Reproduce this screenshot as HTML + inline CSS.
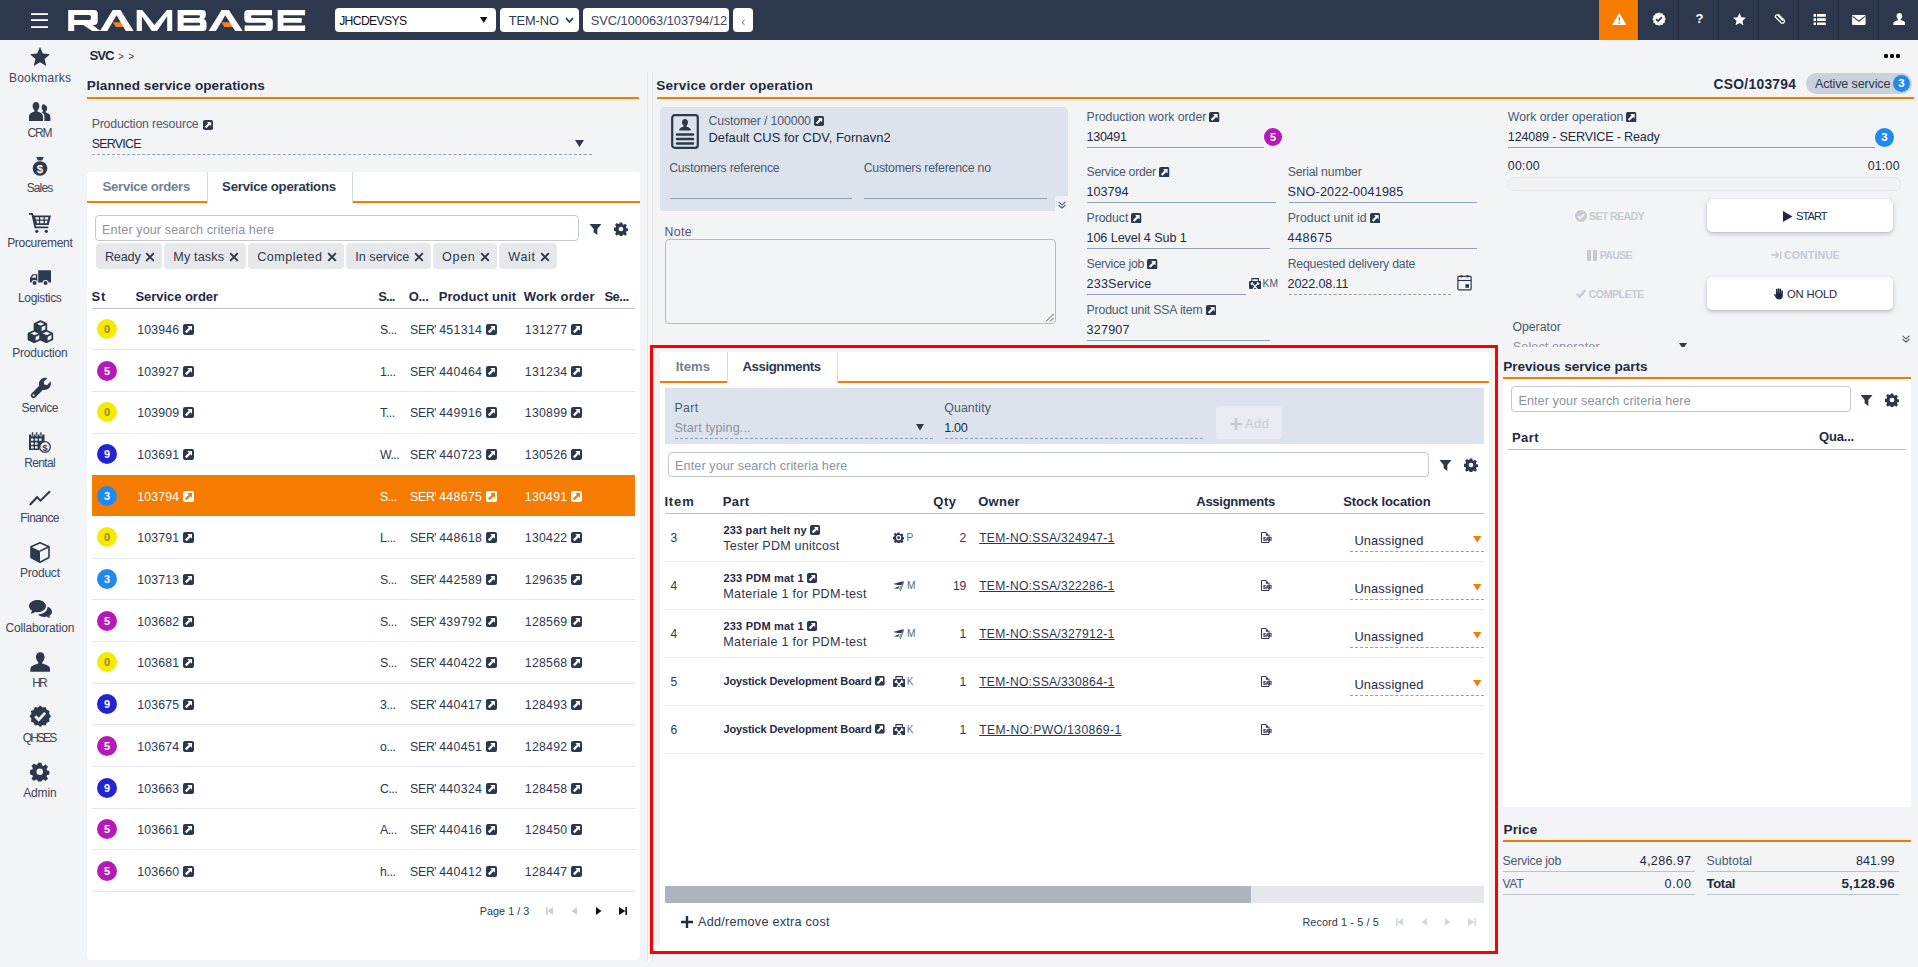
<!DOCTYPE html>
<html><head><meta charset="utf-8"><title>RamBase</title>
<style>
*{box-sizing:border-box;margin:0;padding:0}
html,body{width:1918px;height:967px;overflow:hidden}
body{background:#f3f4f6;font-family:"Liberation Sans",sans-serif;font-size:13px;color:#2d384d;position:relative}
.a{position:absolute}
.t{position:absolute;white-space:nowrap;line-height:20px;height:20px;font-size:12.5px;color:#2d384d}
.b{font-weight:bold}
.g{color:#4d586a}
.ph{color:#8b93a0}
.h{font-weight:bold;font-size:13.6px;color:#1f2a3f}
.th{font-weight:bold;font-size:13px;color:#1f2a3f}
.c{border-radius:50%;text-align:center;font-weight:bold}
.sb{position:absolute;left:0;width:80px;text-align:center;font-size:12px;color:#3b4659;line-height:14px;letter-spacing:-0.1px}
.card{position:absolute;background:#fff;border-radius:4px}
.chip{position:absolute;top:243px;height:26px;background:#e6e8eb;border-radius:4px}
.inp{position:absolute;border:1px solid #c3c8d0;border-radius:4px;background:#fff}
.u{text-decoration:underline}
.dis{color:#c3c8d1;font-weight:bold}
.btn{position:absolute;background:#fff;border-radius:5px;box-shadow:0 2px 4px rgba(60,70,90,.30),0 0 1px rgba(60,70,90,.2)}
</style></head><body>
<svg width="0" height="0" style="position:absolute">
<defs>
<symbol id="lk" viewBox="0 0 10 10"><rect width="10" height="10" rx="1.8" fill="#2d384d"/><path d="M3.9 1.900h4.300v4.300L6.800 4.800 3.300 8.300 1.800 6.800 5.300 3.300z" fill="#fff"/></symbol>
<symbol id="lkw" viewBox="0 0 10 10"><rect width="10" height="10" rx="1.8" fill="#fff"/><path d="M3.9 1.900h4.300v4.300L6.800 4.800 3.300 8.300 1.800 6.800 5.300 3.300z" fill="#f57c00"/></symbol>
<symbol id="filter" viewBox="0 0 14 14"><path d="M0.600 1h12.800L9 6.500v6.300L5 9.900V6.500z"/></symbol>
<symbol id="gear" viewBox="0 0 16 16"><path d="M6.6 0.6h2.8l.4 2.1 1.2.5 1.8-1.2 2 2-1.2 1.8.5 1.2 2.1.4v2.8l-2.1.4-.5 1.2 1.2 1.8-2 2-1.8-1.2-1.2.5-.4 2.1H6.600l-.4-2.1-1.200-.5-1.800 1.200-2-2 1.200-1.800-.5-1.200-2.100-.4V6.600l2.100-.4.5-1.200-1.200-1.800 2-2 1.800 1.200 1.200-.5zM8 5.300a2.700 2.700 0 1 0 0 5.400 2.700 2.700 0 0 0 0-5.400z" fill-rule="evenodd"/></symbol>
<symbol id="gear2" viewBox="0 0 16 16"><path d="M6.600 0.600h2.800l.4 2.100 1.200.5 1.800-1.200 2 2-1.200 1.800.5 1.200 2.100.4v2.800l-2.100.4-.5 1.200 1.200 1.800-2 2-1.800-1.200-1.200.5-.4 2.100H6.600l-.4-2.100-1.200-.5-1.800 1.200-2-2 1.200-1.800-.5-1.200-2.100-.4V6.600l2.100-.4.5-1.200-1.200-1.800 2-2 1.800 1.200 1.200-.5zM8 4.400a3.600 3.600 0 1 0 0 7.200 3.600 3.600 0 0 0 0-7.200z" fill-rule="evenodd"/><circle cx="8" cy="8" r="2"/></symbol>
<symbol id="xm" viewBox="0 0 10 10"><path d="M1.2 1.200l7.600 7.600M8.800 1.200l-7.600 7.600" stroke="#2d384d" stroke-width="1.9" fill="none"/></symbol>
<symbol id="doc" viewBox="0 0 13 13"><path d="M1.500 1.500H6L9 4.500V11.500H1.500Z" fill="none" stroke="#2d384d" stroke-width="1"/><path d="M5.800 1.500V4.700H9Z" fill="#2d384d"/><text x="2.900" y="9.600" font-family="Liberation Sans" font-weight="bold" font-size="4.800" fill="#1a2233" stroke="#2d384d" stroke-width=".25" textLength="8.800" lengthAdjust="spacingAndGlyphs">SAR</text></symbol>
</defs></svg>

<div class="a" style="left:0;top:0;width:1918px;height:40px;background:#2e384d"></div>
<svg class="a" style="left:31px;top:12.8px" width="17" height="2.200" viewBox="0 0 17 2.200"><rect x="0" y=".2" width="17" height="1.800" fill="#fff"/></svg>
<svg class="a" style="left:31px;top:18.8px" width="17" height="2.200" viewBox="0 0 17 2.200"><rect x="0" y=".2" width="17" height="1.800" fill="#fff"/></svg>
<svg class="a" style="left:31px;top:25.8px" width="17" height="2.200" viewBox="0 0 17 2.200"><rect x="0" y=".2" width="17" height="1.800" fill="#fff"/></svg>
<svg class="a" style="left:60px;top:4px" width="260" height="32" viewBox="60 4 260 32">
<g fill="#f58220">
<path d="M112.700 22.200H121.500L125.200 26.900H115.900Z"/>
<path d="M221.400 22.200H230.100L233.800 26.900H224.200Z"/>
</g>
<g fill="#fff" fill-rule="evenodd">
<path d="M68.200 10H94Q97.700 10 97.700 13.500V21.600Q97.700 25.070 94 25.070H92.600L100.400 31.070H92.200L83.300 25.070H74.200V31.070H68.200ZM74.200 14.900H89.200Q90.900 14.900 90.900 16.500V18.500Q90.900 20.100 89.200 20.100H74.200Z"/>
<path d="M112.700 10H120.500L133.600 31.070H125.800L116.550 15.300L107.300 31.070H100Z"/>
<path d="M136.700 10H142.200L154.400 25.100L166.900 10H172.200V31.070H167.200V16.200L157 31.070H151.800L141.900 16.200V31.070H136.700Z"/>
<path d="M177.600 10H202Q205.800 10 205.800 13.300V15.600Q205.800 17.900 203.600 18.900L204.300 19.300Q206.500 20.300 206.500 23V27.500Q206.500 31.070 202.800 31.070H177.600ZM183.600 15.200H198.600Q200 15.200 200 16.600Q200 18 198.600 18H183.600ZM183.600 22.700H198.800Q200.200 22.700 200.200 24.150Q200.200 25.600 198.800 25.600H183.600Z"/>
<path d="M221.600 10H228.900L242.700 31.070H235.200L225.300 15.300L215.900 31.070H208.600Z"/>
<path d="M248 10H272V15.200H252.300Q250.900 15.200 250.900 16.600Q250.900 18 252.300 18H269Q272.800 18 272.800 21.500V27.500Q272.800 31.070 269 31.070H244.600V25.600H264.600Q266 25.600 266 24.150Q266 22.700 264.600 22.700H248Q244.300 22.700 244.300 19V13.600Q244.300 10 248 10Z"/>
<path d="M277.700 10H305.100V15.200H283.400V18H301.700V22.700H283.400V25.600H305.100V31.070H277.700Z"/>
</g></svg>
<div class="a" style="left:335px;top:8px;width:161px;height:24px;background:#fff;border-radius:4px"></div>
<div class="t " style="left:339.15px;top:10.6px;font-size:12.2px;color:#111;letter-spacing:-0.646px;">JHCDEVSYS</div>
<svg class="a" style="left:479.500px;top:17px" width="7.500" height="6" viewBox="0 0 9 7"><path d="M0 0h9L4.500 7z" fill="#111"/></svg>
<div class="a" style="left:500px;top:8px;width:79px;height:24px;background:#fff;border-radius:4px"></div>
<div class="t " style="left:508.7px;top:11.1px;font-size:12.8px;color:#2d384d;letter-spacing:-0.044px;">TEM-NO</div>
<svg class="a" style="left:565.200px;top:17.300px" width="9" height="7" viewBox="0 0 9 7"><path d="M1 1.200l3.500 3.800L8 1.200" stroke="#2d384d" stroke-width="1.700" fill="none"/></svg>
<div class="a" style="left:583px;top:8px;width:146px;height:24px;background:#fff;border-radius:4px"></div>
<div class="t " style="left:590.8px;top:11.4px;font-size:12.8px;color:#3b4659;letter-spacing:-0.014px;">SVC/100063/103794/12</div>
<div class="a" style="left:733px;top:8px;width:20px;height:24px;background:#fff;border-radius:4px"></div>
<svg class="a" style="left:740.500px;top:18.800px" width="4.500" height="7" viewBox="0 0 5 7"><path d="M4 .8L1.200 3.500 4 6.200" stroke="#2d384d" stroke-width="1" fill="none"/></svg>
<div class="a" style="left:1599px;top:0;width:39px;height:40px;background:#f57c00"></div>
<div class="a" style="left:1638px;top:0;width:1px;height:40px;background:#232c3e"></div>
<div class="a" style="left:1678px;top:0;width:1px;height:40px;background:#232c3e"></div>
<div class="a" style="left:1718px;top:0;width:1px;height:40px;background:#232c3e"></div>
<div class="a" style="left:1758px;top:0;width:1px;height:40px;background:#232c3e"></div>
<div class="a" style="left:1798px;top:0;width:1px;height:40px;background:#232c3e"></div>
<div class="a" style="left:1838px;top:0;width:1px;height:40px;background:#232c3e"></div>
<div class="a" style="left:1878px;top:0;width:1px;height:40px;background:#232c3e"></div>
<svg class="a" style="left:1611.65px;top:12.6px" width="14.5" height="12.8" viewBox="0 0 16 14"><path d="M8 .5L15.500 13.500H.5z" fill="#fff" stroke="#fff" stroke-width="1" stroke-linejoin="round"/><path d="M7.100 4.300h1.800l-.35 4.700h-1.100zM7.100 10.100h1.800v1.800H7.100z" fill="#f57c00"/></svg>
<svg class="a" style="left:1651.9px;top:11.7px" width="14.2" height="14.2" viewBox="0 0 16 16"><path d="M8 .4l1.700 1.300 2.100-.3.800 2 2 .8-.3 2.100L15.600 8l-1.300 1.700.3 2.100-2 .8-.8 2-2.100-.3L8 15.600l-1.700-1.300-2.100.3-.8-2-2-.8.3-2.100L.4 8l1.300-1.700-.3-2.100 2-.8.8-2 2.100.3z" fill="#fff"/><path d="M4.600 8l2.300 2.300 4.300-4.600" stroke="#2e384d" stroke-width="1.900" fill="none"/></svg>
<div class="t b" style="left:1689.600px;top:9.200px;width:20px;text-align:center;color:#fff;font-size:13px">?</div>
<svg class="a" style="left:1732.5px;top:12.9px" width="13" height="12.4" viewBox="0 0 20 19"><path d="M10 0l2.900 6.600 7.100.7-5.400 4.700 1.600 7L10 15.300 3.800 19l1.600-7L0 7.300l7.100-.7z" fill="#fff"/></svg>
<svg class="a" style="left:1773.4px;top:13.4px" width="12" height="12" viewBox="0 0 16 16"><path d="M12.800 9.600L6.400 3.200a1.900 1.900 0 0 0-2.700 2.700l7.100 7.100a2.700 2.700 0 0 0 3.800-3.800L7.200 1.800" stroke="#fff" stroke-width="1.700" fill="none" stroke-linecap="round"/></svg>
<svg class="a" style="left:1812.65px;top:13.95px" width="13.3" height="11.3" viewBox="0 0 14 13"><path d="M0 0h2.800v3.200H0zM4 0h10v3.200H4zM0 4.900h2.800v3.200H0zM4 4.900h10v3.200H4zM0 9.800h2.800v3.200H0zM4 9.800h10v3.200H4z" fill="#fff"/></svg>
<svg class="a" style="left:1852.05px;top:14.95px" width="13.7" height="9.9" viewBox="0 0 15 11"><rect width="15" height="11" rx="1" fill="#fff"/><path d="M.7 1.500L7.500 7l6.800-5.500" stroke="#2e384d" stroke-width="1.200" fill="none"/></svg>
<svg class="a" style="left:1892.7px;top:13.2px" width="12.8" height="12.2" viewBox="0 0 14 14"><path d="M7 0c2 0 3.200 1.500 3.200 3.500 0 1.600-.8 3-1.700 3.700v.9c1.500.6 4.700 1.500 5.300 3 .2.600.2 1.900.2 2.900H0c0-1 0-2.300.2-2.900.6-1.500 3.800-2.400 5.300-3v-.9C4.600 6.500 3.800 5.100 3.800 3.500 3.800 1.500 5 0 7 0z" fill="#fff"/></svg>
<div class="a" style="left:1884px;top:54px;width:4px;height:4px;border-radius:1px;background:#111"></div>
<div class="a" style="left:1890px;top:54px;width:4px;height:4px;border-radius:1px;background:#111"></div>
<div class="a" style="left:1896px;top:54px;width:4px;height:4px;border-radius:1px;background:#111"></div>
<div class="a" style="left:0;top:44.3px;width:80px;height:24px;display:flex;align-items:center;justify-content:center"><svg width="20" height="19" viewBox="0 0 20 19" fill="#2d384d"><path d="M10 0l2.900 6.600 7.100.7-5.400 4.700 1.600 7L10 15.300 3.800 19l1.600-7L0 7.300l7.100-.7z"/></svg></div>
<div class="t " style="left:8.91px;top:68px;font-size:12px;color:#3b4659;letter-spacing:0.254px;">Bookmarks</div>
<div class="a" style="left:0;top:99.8px;width:80px;height:24px;display:flex;align-items:center;justify-content:center"><svg width="22" height="19" viewBox="0 0 22 19" fill="#2d384d"><path d="M7 0c2.200 0 3.400 1.700 3.400 4 0 1.900-.9 3.500-1.900 4.300v1.200c1.700.7 4.600 1.700 5.200 3.300.3.800.3 4 .3 6.200H0c0-2.200 0-5.400.3-6.200.6-1.600 3.500-2.600 5.200-3.300V8.300C4.500 7.500 3.600 5.900 3.600 4 3.600 1.700 4.800 0 7 0z"/><path d="M15.400 3c1.800 0 2.800 1.400 2.800 3.200 0 1.500-.7 2.800-1.500 3.400v1c1.400.6 3.900 1.400 4.400 2.700.3.700.3 3.700.3 5.700h-5.900c0-2.500 0-5.400-.4-6.400-.4-1-1.500-1.700-2.700-2.300l1.700-.7v-1c-.8-.6-1.500-1.900-1.500-3.400 0-1.800 1-3.200 2.800-3.200z"/></svg></div>
<div class="t " style="left:27.46px;top:123px;font-size:12px;color:#3b4659;letter-spacing:-1.184px;">CRM</div>
<div class="a" style="left:0;top:154.5px;width:80px;height:24px;display:flex;align-items:center;justify-content:center"><svg width="16" height="19" viewBox="0 0 16 19"><path d="M4.200 0h7.600L10 3.600H6z" fill="#2d384d"/><circle cx="8" cy="11.500" r="7.300" fill="#2d384d"/><text x="8" y="15.600" font-family="Liberation Sans" font-weight="bold" font-size="11.500" fill="#f3f4f6" text-anchor="middle">$</text></svg></div>
<div class="t " style="left:26.66px;top:178px;font-size:12px;color:#3b4659;letter-spacing:-0.868px;">Sales</div>
<div class="a" style="left:0;top:211px;width:80px;height:24px;display:flex;align-items:center;justify-content:center"><svg width="22" height="20" viewBox="0 0 22 20" fill="#2d384d"><path d="M0 0h3.800l.8 2.600H22l-2.300 9.300H6.600l.4 1.700h12.300v1.700H5.500L2.500 1.700H0z"/><path d="M6.200 4.300l.7 2.300h3V4.300zM11.200 4.300v2.300h3.300V4.300zM15.800 4.300v2.300h3l.6-2.300zM7.300 7.800l.7 2.400h1.900V7.800zM11.200 7.800v2.400h3.300V7.800zM15.800 7.800v2.400h2.100l.6-2.400z" fill="#f3f4f6"/><circle cx="7.800" cy="18.300" r="1.600"/><circle cx="17.300" cy="18.300" r="1.600"/></svg></div>
<div class="t " style="left:7.16px;top:233px;font-size:12px;color:#3b4659;letter-spacing:-0.314px;">Procurement</div>
<div class="a" style="left:0;top:266px;width:80px;height:24px;display:flex;align-items:center;justify-content:center"><svg width="21" height="16" viewBox="0 0 23 17" fill="#2d384d"><path d="M9 0h13a1 1 0 0 1 1 1v12.500H9z"/><path d="M2.800 4.300H8v9.200H0V8.600z"/><path d="M2 8.300l1.700-2.700h2.700v2.700z" fill="#f3f4f6"/><circle cx="5" cy="14" r="2.800" stroke="#f3f4f6" stroke-width="1.200"/><circle cx="17" cy="14" r="2.800" stroke="#f3f4f6" stroke-width="1.200"/></svg></div>
<div class="t " style="left:18.06px;top:288px;font-size:12px;color:#3b4659;letter-spacing:-0.366px;">Logistics</div>
<div class="a" style="left:0;top:319.8px;width:80px;height:24px;display:flex;align-items:center;justify-content:center"><svg width="27" height="23" viewBox="0 0 26 22" fill="none" stroke="#2d384d" stroke-width="1.700" stroke-linejoin="round"><g><path d="M13 1l5.600 2.700v5.600L13 12 7.400 9.300V3.700z" fill="#f3f4f6"/><path d="M7.400 3.700L13 6.400V12L7.400 9.300z" fill="#2d384d"/><path d="M7.400 3.700L13 6.400l5.600-2.700M13 6.400V12"/></g><g transform="translate(-5.800 9.300)"><path d="M13 1l5.600 2.700v5.600L13 12 7.400 9.300V3.700z" fill="#f3f4f6"/><path d="M7.400 3.700L13 6.400V12L7.400 9.300z" fill="#2d384d"/><path d="M7.400 3.700L13 6.400l5.600-2.700M13 6.400V12"/></g><g transform="translate(5.800 9.300)"><path d="M13 1l5.600 2.700v5.600L13 12 7.400 9.300V3.700z" fill="#f3f4f6"/><path d="M7.400 3.700L13 6.400V12L7.400 9.300z" fill="#2d384d"/><path d="M7.400 3.700L13 6.400l5.600-2.700M13 6.400V12"/></g></svg></div>
<div class="t " style="left:12.26px;top:343px;font-size:12px;color:#3b4659;letter-spacing:-0.224px;">Production</div>
<div class="a" style="left:0;top:375.6px;width:80px;height:24px;display:flex;align-items:center;justify-content:center"><svg width="21" height="21" viewBox="0 0 20 20" fill="#2d384d"><path d="M19.500 4c.9 2.500.3 5-1.500 6.700-1.600 1.500-3.700 1.900-5.600 1.400L5.200 19.300a2.600 2.600 0 0 1-3.700-3.700L8.700 8.400C8.100 6.400 8.600 4.100 10.200 2.600 11.900.9 14.300.4 16.400 1.100l-3.400 3.400.6 2.700 2.700.6z"/><circle cx="3.400" cy="17.400" r="1" fill="#f3f4f6"/></svg></div>
<div class="t " style="left:21.56px;top:398px;font-size:12px;color:#3b4659;letter-spacing:-0.543px;">Service</div>
<div class="a" style="left:0;top:430px;width:80px;height:24px;display:flex;align-items:center;justify-content:center"><svg width="22" height="21" viewBox="0 0 22 21" fill="#2d384d"><path d="M0 2.500h15.500V11a6 6 0 0 0-5 7H0z"/><path d="M2.500 0h2v4h-2zM6.700 0h2v4h-2zM10.900 0h2v4h-2z" stroke="#f3f4f6" stroke-width=".6"/><path d="M2 6.500h2.600v2.300H2zM6 6.500h2.600v2.300H6zM10 6.500h2.600v2.300H10zM2 10.500h2.600v2.300H2zM6 10.500h2.600v2.300H6zM2 14.300h2.600v2.300H2zM6 14.300h2.600v2.300H6z" fill="#f3f4f6"/><circle cx="16" cy="15" r="5.300" fill="#f3f4f6" stroke="#2d384d" stroke-width="1.300"/><text x="16" y="18.500" font-family="Liberation Sans" font-weight="bold" font-size="9" text-anchor="middle">$</text></svg></div>
<div class="t " style="left:24.26px;top:453px;font-size:12px;color:#3b4659;letter-spacing:-0.666px;">Rental</div>
<div class="a" style="left:0;top:485.8px;width:80px;height:24px;display:flex;align-items:center;justify-content:center"><svg width="22" height="16" viewBox="0 0 22 16" fill="none" stroke="#2d384d" stroke-width="2" stroke-linejoin="miter"><path d="M.8 15L8 7.300l3.500 3.400L21 1.300"/></svg></div>
<div class="t " style="left:20.36px;top:508px;font-size:12px;color:#3b4659;letter-spacing:-0.591px;">Finance</div>
<div class="a" style="left:0;top:540.6px;width:80px;height:24px;display:flex;align-items:center;justify-content:center"><svg width="20" height="21" viewBox="0 0 20 21"><path d="M10 .8l9 4v10.700l-9 4.700-9-4.700V4.800z" fill="#f3f4f6" stroke="#2d384d" stroke-width="1.600" stroke-linejoin="round"/><path d="M1 4.800l9 4.300v11.100l-9-4.700z" fill="#2d384d"/><path d="M10 9.100l9-4.300" stroke="#2d384d" stroke-width="1.600"/></svg></div>
<div class="t " style="left:19.91px;top:563px;font-size:12px;color:#3b4659;letter-spacing:-0.217px;">Product</div>
<div class="a" style="left:0;top:596.7px;width:80px;height:24px;display:flex;align-items:center;justify-content:center"><svg width="23" height="18" viewBox="0 0 23 18" fill="#2d384d"><path d="M8.500 0C13.200 0 17 2.700 17 6.100s-3.800 6.100-8.500 6.100c-.9 0-1.700-.1-2.500-.3-1.300.9-2.900 1.600-4.600 1.700.8-.8 1.500-1.800 1.700-2.900C1.200 9.600 0 8 0 6.100 0 2.700 3.800 0 8.500 0z"/><path d="M18.600 6.700c2.600.9 4.400 2.800 4.400 5.100 0 1.700-1 3.200-2.700 4.200.2 1 .8 1.900 1.500 2-1.500 0-3-.6-4.100-1.400-.7.200-1.500.3-2.300.3-2.700 0-5.100-1-6.500-2.500 5-.1 9.600-3.100 9.700-7.700z"/></svg></div>
<div class="t " style="left:5.46px;top:618px;font-size:12px;color:#3b4659;letter-spacing:-0.147px;">Collaboration</div>
<div class="a" style="left:0;top:649.7px;width:80px;height:24px;display:flex;align-items:center;justify-content:center"><svg width="20.500" height="20" viewBox="0 0 20 19" fill="#2d384d"><path d="M10 0c2.700 0 4.200 2 4.200 4.700 0 2.200-1.100 4-2.300 5v1.200c2 .8 6.600 2 7.400 4 .4.900.4 2.700.4 4.100H.3c0-1.400 0-3.200.4-4.100.8-2 5.400-3.200 7.400-4V9.700C6.900 8.700 5.800 6.900 5.800 4.700 5.800 2 7.300 0 10 0z"/></svg></div>
<div class="t " style="left:32.16px;top:673px;font-size:12px;color:#3b4659;letter-spacing:-1.784px;">HR</div>
<div class="a" style="left:0;top:704.6px;width:80px;height:24px;display:flex;align-items:center;justify-content:center"><svg width="22.500" height="22.500" viewBox="0 0 16 16"><path d="M8 .4l1.700 1.300 2.100-.3.800 2 2 .8-.3 2.100L15.600 8l-1.300 1.700.3 2.100-2 .8-.8 2-2.100-.3L8 15.600l-1.700-1.300-2.100.3-.8-2-2-.8.3-2.100L.4 8l1.300-1.700-.3-2.100 2-.8.8-2 2.100.3z" fill="#2d384d"/><path d="M4.400 8l2.500 2.500 4.600-4.900" stroke="#f3f4f6" stroke-width="2" fill="none"/></svg></div>
<div class="t " style="left:22.66px;top:728px;font-size:12px;color:#3b4659;letter-spacing:-1.864px;">QHSES</div>
<div class="a" style="left:0;top:759.8px;width:80px;height:24px;display:flex;align-items:center;justify-content:center"><svg width="19.500" height="19.500" viewBox="0 0 16 16" fill="#2d384d"><use href="#gear"/></svg></div>
<div class="t " style="left:23.26px;top:783px;font-size:12px;color:#3b4659;letter-spacing:-0.164px;">Admin</div>
<div class="t b" style="left:89.38px;top:46px;font-size:13.2px;color:#1f2a3f;letter-spacing:-0.954px;">SVC</div>
<div class="t " style="left:118.1px;top:46.5px;font-size:10px;color:#2d384d;letter-spacing:0.816px;">&gt; &gt;</div>
<div class="t h" style="left:86.85px;top:76px;letter-spacing:0.047px;">Planned service operations</div>
<div class="a" style="left:87px;top:97px;width:552px;height:2px;background:#f57c00"></div>
<div class="t g" style="left:91.64px;top:114px;font-size:12.3px;letter-spacing:-0.165px;">Production resource</div>
<svg class="a" style="left:202.5px;top:119.5px" width="10" height="10" viewBox="0 0 10 10"><use href="#lk"/></svg>
<div class="t " style="left:91.63px;top:133.5px;font-size:12.4px;color:#1f2a3f;letter-spacing:-0.729px;">SERVICE</div>
<div class="a" style="left:92px;top:154px;width:500px;height:0;border-top:1px dashed #8fa1b3"></div>
<svg class="a" style="left:575px;top:140px" width="9" height="7" viewBox="0 0 9 7"><path d="M0 0h9L4.500 7z" fill="#2d384d"/></svg>
<div class="card" style="left:87px;top:172px;width:553px;height:788px"></div>
<div class="a" style="left:87px;top:201px;width:120px;height:2px;background:#f57c00"></div>
<div class="a" style="left:352.5px;top:201px;width:287.5px;height:2px;background:#f57c00"></div>
<div class="a" style="left:206.5px;top:172px;width:1.0px;height:31px;background:#d5d9e0"></div>
<div class="a" style="left:352px;top:172px;width:1px;height:31px;background:#d5d9e0"></div>
<div class="t b" style="left:102.58px;top:176.5px;font-size:13.2px;color:#76808f;letter-spacing:-0.302px;">Service orders</div>
<div class="t b" style="left:222.08px;top:176.5px;font-size:13.2px;color:#2d384d;letter-spacing:-0.235px;">Service operations</div>
<div class="inp" style="left:95px;top:215px;width:484px;height:26px"></div>
<div class="t ph" style="left:102.12px;top:219.5px;font-size:12.6px;letter-spacing:0.095px;">Enter your search criteria here</div>
<svg class="a" style="left:589px;top:223px" width="13" height="13" viewBox="0 0 14 14" fill="#2d384d"><use href="#filter"/></svg>
<svg class="a" style="left:614px;top:222px" width="14" height="14" viewBox="0 0 16 16" fill="#2d384d"><use href="#gear"/></svg>
<div class="chip" style="left:96px;width:65.6px"></div>
<div class="t " style="left:104.92px;top:246.6px;font-size:12.6px;letter-spacing:-0.142px;">Ready</div>
<svg class="a" style="left:145.1px;top:252px" width="10" height="10" viewBox="0 0 10 10"><use href="#xm"/></svg>
<div class="chip" style="left:164.4px;width:81.29999999999998px"></div>
<div class="t " style="left:173.32px;top:246.6px;font-size:12.6px;letter-spacing:0.136px;">My tasks</div>
<svg class="a" style="left:229.2px;top:252px" width="10" height="10" viewBox="0 0 10 10"><use href="#xm"/></svg>
<div class="chip" style="left:248.4px;width:95.29999999999998px"></div>
<div class="t " style="left:257.32px;top:246.6px;font-size:12.6px;letter-spacing:0.466px;">Completed</div>
<svg class="a" style="left:327.2px;top:252px" width="10" height="10" viewBox="0 0 10 10"><use href="#xm"/></svg>
<div class="chip" style="left:346.4px;width:84.40000000000003px"></div>
<div class="t " style="left:355.32px;top:246.6px;font-size:12.6px;letter-spacing:0.015px;">In service</div>
<svg class="a" style="left:414.3px;top:252px" width="10" height="10" viewBox="0 0 10 10"><use href="#xm"/></svg>
<div class="chip" style="left:433.2px;width:63.5px"></div>
<div class="t " style="left:442.12px;top:246.6px;font-size:12.6px;letter-spacing:0.608px;">Open</div>
<svg class="a" style="left:480.2px;top:252px" width="10" height="10" viewBox="0 0 10 10"><use href="#xm"/></svg>
<div class="chip" style="left:499.4px;width:57.200000000000045px"></div>
<div class="t " style="left:508.32px;top:246.6px;font-size:12.6px;letter-spacing:0.668px;">Wait</div>
<svg class="a" style="left:540.1px;top:252px" width="10" height="10" viewBox="0 0 10 10"><use href="#xm"/></svg>
<div class="t th" style="left:91.59px;top:286.8px;letter-spacing:0.690px;">St</div>
<div class="t th" style="left:135.39px;top:286.8px;letter-spacing:-0.035px;">Service order</div>
<div class="t th" style="left:378.19px;top:286.8px;letter-spacing:-0.742px;">S...</div>
<div class="t th" style="left:408.69px;top:286.8px;letter-spacing:-0.288px;">O...</div>
<div class="t th" style="left:438.69px;top:286.8px;letter-spacing:0.068px;">Product unit</div>
<div class="t th" style="left:523.69px;top:286.8px;letter-spacing:0.187px;">Work order</div>
<div class="t th" style="left:604.49px;top:286.8px;letter-spacing:-0.540px;">Se...</div>
<div class="a" style="left:92px;top:308px;width:543px;height:1px;background:#b9c2cf"></div>
<div class="a" style="left:92px;top:349px;width:543px;height:1px;background:#e3e6ee"></div>
<div class="a c" style="left:97.0px;top:319.0px;width:20px;height:20px;line-height:20px;background:#f5ea00;color:#8a8838;font-size:11px">0</div>
<div class="t " style="left:137.34px;top:319.7px;font-size:12.3px;letter-spacing:0.170px;">103946</div>
<svg class="a" style="left:183px;top:323.5px" width="11" height="11" viewBox="0 0 10 10"><use href="#lk"/></svg>
<div class="t " style="left:380px;top:319.7px;font-size:12.3px;letter-spacing:-0.461px;">S...</div>
<div class="t" style="left:410px;top:319.7px;width:25.500px;overflow:hidden;font-size:12.3px;letter-spacing:-0.2px;">SERV</div>
<div class="t " style="left:439.14px;top:319.7px;font-size:12.3px;letter-spacing:0.350px;">451314</div>
<svg class="a" style="left:486px;top:323.5px" width="11" height="11" viewBox="0 0 10 10"><use href="#lk"/></svg>
<div class="t " style="left:524.84px;top:319.7px;font-size:12.3px;letter-spacing:0.250px;">131277</div>
<svg class="a" style="left:571px;top:323.5px" width="11" height="11" viewBox="0 0 10 10"><use href="#lk"/></svg>
<div class="a" style="left:92px;top:391px;width:543px;height:1px;background:#e3e6ee"></div>
<div class="a c" style="left:97.0px;top:361.0px;width:20px;height:20px;line-height:20px;background:#b51ab8;color:#fff;font-size:11px">5</div>
<div class="t " style="left:137.34px;top:361.7px;font-size:12.3px;letter-spacing:0.170px;">103927</div>
<svg class="a" style="left:183px;top:365.5px" width="11" height="11" viewBox="0 0 10 10"><use href="#lk"/></svg>
<div class="t " style="left:380px;top:361.7px;font-size:12.3px;letter-spacing:-0.427px;">1...</div>
<div class="t" style="left:410px;top:361.7px;width:25.500px;overflow:hidden;font-size:12.3px;letter-spacing:-0.2px;">SERV</div>
<div class="t " style="left:439.14px;top:361.7px;font-size:12.3px;letter-spacing:0.350px;">440464</div>
<svg class="a" style="left:486px;top:365.5px" width="11" height="11" viewBox="0 0 10 10"><use href="#lk"/></svg>
<div class="t " style="left:524.84px;top:361.7px;font-size:12.3px;letter-spacing:0.250px;">131234</div>
<svg class="a" style="left:571px;top:365.5px" width="11" height="11" viewBox="0 0 10 10"><use href="#lk"/></svg>
<div class="a" style="left:92px;top:433px;width:543px;height:1px;background:#e3e6ee"></div>
<div class="a c" style="left:97.0px;top:402.0px;width:20px;height:20px;line-height:20px;background:#f5ea00;color:#8a8838;font-size:11px">0</div>
<div class="t " style="left:137.34px;top:402.7px;font-size:12.3px;letter-spacing:0.170px;">103909</div>
<svg class="a" style="left:183px;top:406.5px" width="11" height="11" viewBox="0 0 10 10"><use href="#lk"/></svg>
<div class="t " style="left:380px;top:402.7px;font-size:12.3px;letter-spacing:-0.410px;">T...</div>
<div class="t" style="left:410px;top:402.7px;width:25.500px;overflow:hidden;font-size:12.3px;letter-spacing:-0.2px;">SERV</div>
<div class="t " style="left:439.14px;top:402.7px;font-size:12.3px;letter-spacing:0.350px;">449916</div>
<svg class="a" style="left:486px;top:406.5px" width="11" height="11" viewBox="0 0 10 10"><use href="#lk"/></svg>
<div class="t " style="left:524.84px;top:402.7px;font-size:12.3px;letter-spacing:0.250px;">130899</div>
<svg class="a" style="left:571px;top:406.5px" width="11" height="11" viewBox="0 0 10 10"><use href="#lk"/></svg>
<div class="a c" style="left:97.0px;top:444.0px;width:20px;height:20px;line-height:20px;background:#2323d4;color:#fff;font-size:11px">9</div>
<div class="t " style="left:137.34px;top:444.7px;font-size:12.3px;letter-spacing:0.170px;">103691</div>
<svg class="a" style="left:183px;top:448.5px" width="11" height="11" viewBox="0 0 10 10"><use href="#lk"/></svg>
<div class="t " style="left:380px;top:444.7px;font-size:12.3px;letter-spacing:-0.530px;">W...</div>
<div class="t" style="left:410px;top:444.7px;width:25.500px;overflow:hidden;font-size:12.3px;letter-spacing:-0.2px;">SERV</div>
<div class="t " style="left:439.14px;top:444.7px;font-size:12.3px;letter-spacing:0.350px;">440723</div>
<svg class="a" style="left:486px;top:448.5px" width="11" height="11" viewBox="0 0 10 10"><use href="#lk"/></svg>
<div class="t " style="left:524.84px;top:444.7px;font-size:12.3px;letter-spacing:0.250px;">130526</div>
<svg class="a" style="left:571px;top:448.5px" width="11" height="11" viewBox="0 0 10 10"><use href="#lk"/></svg>
<div class="a" style="left:92px;top:475px;width:543px;height:41px;background:#f57c00"></div>
<div class="a c" style="left:97.0px;top:486.0px;width:20px;height:20px;line-height:20px;background:#2089f0;color:#fff;font-size:11px">3</div>
<div class="t " style="left:137.34px;top:486.7px;color:#fff;font-size:12.3px;letter-spacing:0.170px;">103794</div>
<svg class="a" style="left:183px;top:490.5px" width="11" height="11" viewBox="0 0 10 10"><use href="#lkw"/></svg>
<div class="t " style="left:380px;top:486.7px;color:#fff;font-size:12.3px;letter-spacing:-0.461px;">S...</div>
<div class="t" style="left:410px;top:486.7px;width:25.500px;overflow:hidden;font-size:12.3px;letter-spacing:-0.2px;color:#fff;">SERV</div>
<div class="t " style="left:439.14px;top:486.7px;color:#fff;font-size:12.3px;letter-spacing:0.350px;">448675</div>
<svg class="a" style="left:486px;top:490.5px" width="11" height="11" viewBox="0 0 10 10"><use href="#lkw"/></svg>
<div class="t " style="left:524.84px;top:486.7px;color:#fff;font-size:12.3px;letter-spacing:0.250px;">130491</div>
<svg class="a" style="left:571px;top:490.5px" width="11" height="11" viewBox="0 0 10 10"><use href="#lkw"/></svg>
<div class="a" style="left:92px;top:558px;width:543px;height:1px;background:#e3e6ee"></div>
<div class="a c" style="left:97.0px;top:527.0px;width:20px;height:20px;line-height:20px;background:#f5ea00;color:#8a8838;font-size:11px">0</div>
<div class="t " style="left:137.34px;top:527.7px;font-size:12.3px;letter-spacing:0.170px;">103791</div>
<svg class="a" style="left:183px;top:531.5px" width="11" height="11" viewBox="0 0 10 10"><use href="#lk"/></svg>
<div class="t " style="left:380px;top:527.7px;font-size:12.3px;letter-spacing:-0.427px;">L...</div>
<div class="t" style="left:410px;top:527.7px;width:25.500px;overflow:hidden;font-size:12.3px;letter-spacing:-0.2px;">SERV</div>
<div class="t " style="left:439.14px;top:527.7px;font-size:12.3px;letter-spacing:0.350px;">448618</div>
<svg class="a" style="left:486px;top:531.5px" width="11" height="11" viewBox="0 0 10 10"><use href="#lk"/></svg>
<div class="t " style="left:524.84px;top:527.7px;font-size:12.3px;letter-spacing:0.250px;">130422</div>
<svg class="a" style="left:571px;top:531.5px" width="11" height="11" viewBox="0 0 10 10"><use href="#lk"/></svg>
<div class="a" style="left:92px;top:599px;width:543px;height:1px;background:#e3e6ee"></div>
<div class="a c" style="left:97.0px;top:569.0px;width:20px;height:20px;line-height:20px;background:#2089f0;color:#fff;font-size:11px">3</div>
<div class="t " style="left:137.34px;top:569.7px;font-size:12.3px;letter-spacing:0.170px;">103713</div>
<svg class="a" style="left:183px;top:573.5px" width="11" height="11" viewBox="0 0 10 10"><use href="#lk"/></svg>
<div class="t " style="left:380px;top:569.7px;font-size:12.3px;letter-spacing:-0.461px;">S...</div>
<div class="t" style="left:410px;top:569.7px;width:25.500px;overflow:hidden;font-size:12.3px;letter-spacing:-0.2px;">SERV</div>
<div class="t " style="left:439.14px;top:569.7px;font-size:12.3px;letter-spacing:0.350px;">442589</div>
<svg class="a" style="left:486px;top:573.5px" width="11" height="11" viewBox="0 0 10 10"><use href="#lk"/></svg>
<div class="t " style="left:524.84px;top:569.7px;font-size:12.3px;letter-spacing:0.250px;">129635</div>
<svg class="a" style="left:571px;top:573.5px" width="11" height="11" viewBox="0 0 10 10"><use href="#lk"/></svg>
<div class="a" style="left:92px;top:641px;width:543px;height:1px;background:#e3e6ee"></div>
<div class="a c" style="left:97.0px;top:611.0px;width:20px;height:20px;line-height:20px;background:#b51ab8;color:#fff;font-size:11px">5</div>
<div class="t " style="left:137.34px;top:611.7px;font-size:12.3px;letter-spacing:0.170px;">103682</div>
<svg class="a" style="left:183px;top:615.5px" width="11" height="11" viewBox="0 0 10 10"><use href="#lk"/></svg>
<div class="t " style="left:380px;top:611.7px;font-size:12.3px;letter-spacing:-0.461px;">S...</div>
<div class="t" style="left:410px;top:611.7px;width:25.500px;overflow:hidden;font-size:12.3px;letter-spacing:-0.2px;">SERV</div>
<div class="t " style="left:439.14px;top:611.7px;font-size:12.3px;letter-spacing:0.350px;">439792</div>
<svg class="a" style="left:486px;top:615.5px" width="11" height="11" viewBox="0 0 10 10"><use href="#lk"/></svg>
<div class="t " style="left:524.84px;top:611.7px;font-size:12.3px;letter-spacing:0.250px;">128569</div>
<svg class="a" style="left:571px;top:615.5px" width="11" height="11" viewBox="0 0 10 10"><use href="#lk"/></svg>
<div class="a" style="left:92px;top:683px;width:543px;height:1px;background:#e3e6ee"></div>
<div class="a c" style="left:97.0px;top:652.0px;width:20px;height:20px;line-height:20px;background:#f5ea00;color:#8a8838;font-size:11px">0</div>
<div class="t " style="left:137.34px;top:652.7px;font-size:12.3px;letter-spacing:0.170px;">103681</div>
<svg class="a" style="left:183px;top:656.5px" width="11" height="11" viewBox="0 0 10 10"><use href="#lk"/></svg>
<div class="t " style="left:380px;top:652.7px;font-size:12.3px;letter-spacing:-0.461px;">S...</div>
<div class="t" style="left:410px;top:652.7px;width:25.500px;overflow:hidden;font-size:12.3px;letter-spacing:-0.2px;">SERV</div>
<div class="t " style="left:439.14px;top:652.7px;font-size:12.3px;letter-spacing:0.350px;">440422</div>
<svg class="a" style="left:486px;top:656.5px" width="11" height="11" viewBox="0 0 10 10"><use href="#lk"/></svg>
<div class="t " style="left:524.84px;top:652.7px;font-size:12.3px;letter-spacing:0.250px;">128568</div>
<svg class="a" style="left:571px;top:656.5px" width="11" height="11" viewBox="0 0 10 10"><use href="#lk"/></svg>
<div class="a" style="left:92px;top:724px;width:543px;height:1px;background:#e3e6ee"></div>
<div class="a c" style="left:97.0px;top:694.0px;width:20px;height:20px;line-height:20px;background:#2323d4;color:#fff;font-size:11px">9</div>
<div class="t " style="left:137.34px;top:694.7px;font-size:12.3px;letter-spacing:0.170px;">103675</div>
<svg class="a" style="left:183px;top:698.5px" width="11" height="11" viewBox="0 0 10 10"><use href="#lk"/></svg>
<div class="t " style="left:380px;top:694.7px;font-size:12.3px;letter-spacing:-0.427px;">3...</div>
<div class="t" style="left:410px;top:694.7px;width:25.500px;overflow:hidden;font-size:12.3px;letter-spacing:-0.2px;">SERV</div>
<div class="t " style="left:439.14px;top:694.7px;font-size:12.3px;letter-spacing:0.350px;">440417</div>
<svg class="a" style="left:486px;top:698.5px" width="11" height="11" viewBox="0 0 10 10"><use href="#lk"/></svg>
<div class="t " style="left:524.84px;top:694.7px;font-size:12.3px;letter-spacing:0.250px;">128493</div>
<svg class="a" style="left:571px;top:698.5px" width="11" height="11" viewBox="0 0 10 10"><use href="#lk"/></svg>
<div class="a" style="left:92px;top:766px;width:543px;height:1px;background:#e3e6ee"></div>
<div class="a c" style="left:97.0px;top:736.0px;width:20px;height:20px;line-height:20px;background:#b51ab8;color:#fff;font-size:11px">5</div>
<div class="t " style="left:137.34px;top:736.7px;font-size:12.3px;letter-spacing:0.170px;">103674</div>
<svg class="a" style="left:183px;top:740.5px" width="11" height="11" viewBox="0 0 10 10"><use href="#lk"/></svg>
<div class="t " style="left:380px;top:736.7px;font-size:12.3px;letter-spacing:-0.427px;">o...</div>
<div class="t" style="left:410px;top:736.7px;width:25.500px;overflow:hidden;font-size:12.3px;letter-spacing:-0.2px;">SERV</div>
<div class="t " style="left:439.14px;top:736.7px;font-size:12.3px;letter-spacing:0.350px;">440451</div>
<svg class="a" style="left:486px;top:740.5px" width="11" height="11" viewBox="0 0 10 10"><use href="#lk"/></svg>
<div class="t " style="left:524.84px;top:736.7px;font-size:12.3px;letter-spacing:0.250px;">128492</div>
<svg class="a" style="left:571px;top:740.5px" width="11" height="11" viewBox="0 0 10 10"><use href="#lk"/></svg>
<div class="a" style="left:92px;top:808px;width:543px;height:1px;background:#e3e6ee"></div>
<div class="a c" style="left:97.0px;top:778.0px;width:20px;height:20px;line-height:20px;background:#2323d4;color:#fff;font-size:11px">9</div>
<div class="t " style="left:137.34px;top:778.7px;font-size:12.3px;letter-spacing:0.170px;">103663</div>
<svg class="a" style="left:183px;top:782.5px" width="11" height="11" viewBox="0 0 10 10"><use href="#lk"/></svg>
<div class="t " style="left:380px;top:778.7px;font-size:12.3px;letter-spacing:-0.479px;">C...</div>
<div class="t" style="left:410px;top:778.7px;width:25.500px;overflow:hidden;font-size:12.3px;letter-spacing:-0.2px;">SERV</div>
<div class="t " style="left:439.14px;top:778.7px;font-size:12.3px;letter-spacing:0.350px;">440324</div>
<svg class="a" style="left:486px;top:782.5px" width="11" height="11" viewBox="0 0 10 10"><use href="#lk"/></svg>
<div class="t " style="left:524.84px;top:778.7px;font-size:12.3px;letter-spacing:0.250px;">128458</div>
<svg class="a" style="left:571px;top:782.5px" width="11" height="11" viewBox="0 0 10 10"><use href="#lk"/></svg>
<div class="a" style="left:92px;top:849px;width:543px;height:1px;background:#e3e6ee"></div>
<div class="a c" style="left:97.0px;top:819.0px;width:20px;height:20px;line-height:20px;background:#b51ab8;color:#fff;font-size:11px">5</div>
<div class="t " style="left:137.34px;top:819.7px;font-size:12.3px;letter-spacing:0.170px;">103661</div>
<svg class="a" style="left:183px;top:823.5px" width="11" height="11" viewBox="0 0 10 10"><use href="#lk"/></svg>
<div class="t " style="left:380px;top:819.7px;font-size:12.3px;letter-spacing:-0.461px;">A...</div>
<div class="t" style="left:410px;top:819.7px;width:25.500px;overflow:hidden;font-size:12.3px;letter-spacing:-0.2px;">SERV</div>
<div class="t " style="left:439.14px;top:819.7px;font-size:12.3px;letter-spacing:0.350px;">440416</div>
<svg class="a" style="left:486px;top:823.5px" width="11" height="11" viewBox="0 0 10 10"><use href="#lk"/></svg>
<div class="t " style="left:524.84px;top:819.7px;font-size:12.3px;letter-spacing:0.250px;">128450</div>
<svg class="a" style="left:571px;top:823.5px" width="11" height="11" viewBox="0 0 10 10"><use href="#lk"/></svg>
<div class="a" style="left:92px;top:891px;width:543px;height:1px;background:#e3e6ee"></div>
<div class="a c" style="left:97.0px;top:861.0px;width:20px;height:20px;line-height:20px;background:#b51ab8;color:#fff;font-size:11px">5</div>
<div class="t " style="left:137.34px;top:861.7px;font-size:12.3px;letter-spacing:0.170px;">103660</div>
<svg class="a" style="left:183px;top:865.5px" width="11" height="11" viewBox="0 0 10 10"><use href="#lk"/></svg>
<div class="t " style="left:380px;top:861.7px;font-size:12.3px;letter-spacing:-0.427px;">h...</div>
<div class="t" style="left:410px;top:861.7px;width:25.500px;overflow:hidden;font-size:12.3px;letter-spacing:-0.2px;">SERV</div>
<div class="t " style="left:439.14px;top:861.7px;font-size:12.3px;letter-spacing:0.350px;">440412</div>
<svg class="a" style="left:486px;top:865.5px" width="11" height="11" viewBox="0 0 10 10"><use href="#lk"/></svg>
<div class="t " style="left:524.84px;top:861.7px;font-size:12.3px;letter-spacing:0.250px;">128447</div>
<svg class="a" style="left:571px;top:865.5px" width="11" height="11" viewBox="0 0 10 10"><use href="#lk"/></svg>
<div class="t " style="left:479.74px;top:901px;font-size:10.8px;letter-spacing:0.041px;">Page 1 / 3</div>
<svg class="a" style="left:545px;top:907px" width="10" height="8" viewBox="0 0 10 8" fill="#c9ced6"><path d="M1 0h1.600v8H1zM8 0v8L2.600 4z"/></svg>
<svg class="a" style="left:570px;top:907px" width="10" height="8" viewBox="0 0 10 8" fill="#c9ced6"><path d="M7 0v8L1.500 4z"/></svg>
<svg class="a" style="left:593.5px;top:907px" width="10" height="8" viewBox="0 0 10 8" fill="#111"><path d="M2 0v8l5.500-4z"/></svg>
<svg class="a" style="left:618px;top:907px" width="10" height="8" viewBox="0 0 10 8" fill="#111"><path d="M7.400 0H9v8H7.400zM1 0v8l6.400-4z"/></svg>
<div class="a" style="left:647px;top:72px;width:6px;height:889px;background:#f6f7f9;border-left:1px solid #e4e6ea;border-right:1px solid #e4e6ea"></div>
<div class="t h" style="left:656.25px;top:76px;letter-spacing:0.180px;">Service order operation</div>
<div class="a" style="left:657px;top:97px;width:1257px;height:2px;background:#f57c00"></div>
<div class="t b" style="left:1713.43px;top:74.6px;font-size:13.8px;color:#1f2a3f;letter-spacing:0.313px;">CSO/103794</div>
<div class="a" style="left:1806px;top:73px;width:106px;height:21px;background:#c9d1dc;border-radius:11px"></div>
<div class="t " style="left:1814.92px;top:73.5px;font-size:12.6px;letter-spacing:-0.165px;">Active service</div>
<div class="a c" style="left:1893.0px;top:75.0px;width:17px;height:17px;line-height:17px;background:#2089f0;color:#fff;font-size:11.5px">3</div>
<div class="a" style="left:660px;top:107px;width:408px;height:104px;background:#dde3ec;border-radius:5px 5px 2px 2px"></div>
<svg class="a" style="left:671px;top:114px" width="28" height="35" viewBox="0 0 28 35"><rect x="1.200" y="1.200" width="25.600" height="32.600" rx="2.500" fill="none" stroke="#2d384d" stroke-width="2.200"/>
<path d="M14 5c1.900 0 3 1.400 3 3.200 0 1.500-.7 2.700-1.500 3.300v.9c1.300.5 3.500 1.200 4.100 2.500.2.500.2 1 .2 1.600H8.200c0-.6 0-1.100.2-1.600.6-1.300 2.800-2 4.100-2.500v-.9C11.700 10.900 11 9.700 11 8.200 11 6.400 12.100 5 14 5z" fill="#2d384d"/>
<path d="M6 20.500h16M6 25h16M6 29.500h16" stroke="#2d384d" stroke-width="2.600" stroke-linecap="round"/></svg>
<div class="t g" style="left:708.44px;top:111px;font-size:12.3px;letter-spacing:-0.131px;">Customer / 100000</div>
<svg class="a" style="left:813.5px;top:116px" width="10" height="10" viewBox="0 0 10 10"><use href="#lk"/></svg>
<div class="t " style="left:708.4px;top:127.6px;font-size:12.9px;color:#1f2a3f;letter-spacing:0.024px;">Default CUS for CDV, Fornavn2</div>
<div class="t g" style="left:669.14px;top:158px;font-size:12.3px;letter-spacing:-0.235px;">Customers reference</div>
<div class="t g" style="left:863.64px;top:158px;font-size:12.3px;letter-spacing:-0.215px;">Customers reference no</div>
<div class="a" style="left:670px;top:198px;width:182px;height:1px;background:#8fa1b3"></div>
<div class="a" style="left:864px;top:198px;width:183px;height:1px;background:#8fa1b3"></div>
<div class="a" style="left:1055px;top:196px;width:13px;height:15px;background:#f0f2f5;border-radius:3px 0 2px 0"></div>
<svg class="a" style="left:1057.900px;top:200.500px" width="8" height="8" viewBox="0 0 8 8"><path d="M.6 .8l3.400 3L7.400 .8M.6 4l3.400 3 3.400-3" stroke="#4d586a" stroke-width="1.050" fill="none"/></svg>
<div class="t g" style="left:664.44px;top:221.5px;font-size:12.3px;letter-spacing:0.372px;">Note</div>
<div class="a" style="left:665px;top:239px;width:391px;height:85px;border:1px solid #b4bbc6;border-radius:4px"></div>
<svg class="a" style="left:1045px;top:313px" width="9" height="9" viewBox="0 0 9 9"><path d="M8.500 1L1 8.500M8.500 5L5 8.500" stroke="#555" stroke-width="1" fill="none"/></svg>
<div class="t g" style="left:1086.54px;top:106.8px;font-size:12.3px;letter-spacing:-0.025px;">Production work order</div>
<div class="t " style="left:1086.52px;top:126.6px;font-size:12.6px;color:#1f2a3f;letter-spacing:-0.319px;">130491</div>
<div class="a" style="left:1087.4px;top:146.8px;width:176.6px;height:1px;background:#8fa1b3"></div>
<div class="a c" style="left:1264.0px;top:128.0px;width:18px;height:18px;line-height:18px;background:#b51ab8;color:#fff;font-size:11px">5</div>
<div class="t g" style="left:1086.54px;top:162px;font-size:12.3px;letter-spacing:-0.295px;">Service order</div>
<div class="t " style="left:1086.52px;top:181.8px;font-size:12.6px;color:#1f2a3f;">103794</div>
<div class="a" style="left:1087.4px;top:202px;width:188.6px;height:1px;background:#8fa1b3"></div>
<div class="t g" style="left:1287.64px;top:162px;font-size:12.3px;letter-spacing:-0.197px;">Serial number</div>
<div class="t " style="left:1287.62px;top:181.8px;font-size:12.6px;color:#1f2a3f;letter-spacing:0.200px;">SNO-2022-0041985</div>
<div class="a" style="left:1288.5px;top:202px;width:188.5px;height:1px;background:#8fa1b3"></div>
<div class="t g" style="left:1086.54px;top:208px;font-size:12.3px;letter-spacing:-0.099px;">Product</div>
<div class="t " style="left:1086.52px;top:227.8px;font-size:12.6px;color:#1f2a3f;letter-spacing:-0.081px;">106 Level 4 Sub 1</div>
<div class="a" style="left:1087.4px;top:248px;width:182.6px;height:1px;background:#8fa1b3"></div>
<div class="t g" style="left:1287.64px;top:208px;font-size:12.3px;letter-spacing:0.021px;">Product unit id</div>
<div class="t " style="left:1287.62px;top:227.8px;font-size:12.6px;color:#1f2a3f;letter-spacing:0.461px;">448675</div>
<div class="a" style="left:1288.5px;top:248px;width:188.5px;height:1px;background:#8fa1b3"></div>
<div class="t g" style="left:1086.54px;top:254px;font-size:12.3px;letter-spacing:-0.304px;">Service job</div>
<div class="t " style="left:1086.52px;top:273.8px;font-size:12.6px;color:#1f2a3f;letter-spacing:0.180px;">233Service</div>
<div class="a" style="left:1087.4px;top:294px;width:158.6px;height:1px;background:#8fa1b3"></div>
<div class="t g" style="left:1287.64px;top:254px;font-size:12.3px;letter-spacing:-0.219px;">Requested delivery date</div>
<div class="t " style="left:1287.62px;top:273.8px;font-size:12.6px;color:#1f2a3f;letter-spacing:-0.130px;">2022.08.11</div>
<div class="a" style="left:1288.5px;top:294px;width:162.5px;height:0;border-top:1px dashed #8fa1b3"></div>
<div class="t g" style="left:1086.54px;top:300px;font-size:12.3px;letter-spacing:-0.176px;">Product unit SSA item</div>
<div class="t " style="left:1086.52px;top:319.8px;font-size:12.6px;color:#1f2a3f;letter-spacing:0.201px;">327907</div>
<div class="a" style="left:1087.4px;top:340px;width:182.6px;height:1px;background:#8fa1b3"></div>
<svg class="a" style="left:1209.4px;top:111.6px" width="10.5" height="10.5" viewBox="0 0 10 10"><use href="#lk"/></svg>
<svg class="a" style="left:1159.2px;top:166.8px" width="10.5" height="10.5" viewBox="0 0 10 10"><use href="#lk"/></svg>
<svg class="a" style="left:1131.4px;top:212.8px" width="10.5" height="10.5" viewBox="0 0 10 10"><use href="#lk"/></svg>
<svg class="a" style="left:1369.6px;top:212.8px" width="10.5" height="10.5" viewBox="0 0 10 10"><use href="#lk"/></svg>
<svg class="a" style="left:1147.4px;top:258.8px" width="10.5" height="10.5" viewBox="0 0 10 10"><use href="#lk"/></svg>
<svg class="a" style="left:1205.7px;top:304.8px" width="10.5" height="10.5" viewBox="0 0 10 10"><use href="#lk"/></svg>
<svg class="a" style="left:1248.800px;top:277.900px" width="12.300" height="11" viewBox="0 0 12.300 11"><path d="M2.900 3.200V.600H9.400V3.200" fill="none" stroke="#2d384d" stroke-width="1.100"/><rect x="0" y="3" width="12.300" height="8" rx=".9" fill="#2d384d"/><path d="M2.300 5.200L4.500 6.800 8.300 11M9.800 5.200L7.600 6.800 4 11" stroke="#f3f4f6" stroke-width="1.250" fill="none"/><path d="M1.800 6.300l2.300-1.800" stroke="#f3f4f6" stroke-width="1.600"/><path d="M10.300 6.300L8 4.500" stroke="#f3f4f6" stroke-width="1.600"/></svg>
<div class="t g" style="left:1262.6px;top:274px;font-size:10.3px;">KM</div>
<svg class="a" style="left:1457px;top:275px" width="15" height="15.500" viewBox="0 0 15 15.500"><rect x=".9" y="1.400" width="13.200" height="13.500" rx=".8" fill="none" stroke="#2d384d" stroke-width="1.200"/><path d="M.9 5.500h13.200" stroke="#2d384d" stroke-width="1.100"/><circle cx="4.400" cy="1.300" r="1.250" fill="#2d384d"/><circle cx="10.400" cy="1.300" r="1.250" fill="#2d384d"/><rect x="8.400" y="9.200" width="3.600" height="3.600" fill="#2d384d"/></svg>
<div class="card" style="left:660px;top:352px;width:829px;height:600px;border-radius:4px 4px 0 0"></div>
<div class="a" style="left:660px;top:381px;width:67px;height:2px;background:#f57c00"></div>
<div class="a" style="left:837.5px;top:381px;width:651.5px;height:2px;background:#f57c00"></div>
<div class="a" style="left:726.5px;top:352px;width:1.0px;height:31px;background:#d5d9e0"></div>
<div class="a" style="left:837px;top:352px;width:1px;height:31px;background:#d5d9e0"></div>
<div class="t b" style="left:675.68px;top:357px;font-size:13.2px;color:#76808f;letter-spacing:0.016px;">Items</div>
<div class="t b" style="left:742.48px;top:357px;font-size:13.2px;color:#2d384d;letter-spacing:-0.410px;">Assignments</div>
<div class="a" style="left:665px;top:388px;width:819px;height:56px;background:#dde3ec"></div>
<div class="t g" style="left:674.54px;top:398.3px;font-size:12.3px;letter-spacing:0.346px;">Part</div>
<div class="t ph" style="left:674.52px;top:418px;font-size:12.6px;letter-spacing:0.131px;">Start typing...</div>
<div class="a" style="left:675px;top:438px;width:258px;height:0;border-top:1px dashed #8fa1b3"></div>
<svg class="a" style="left:916px;top:424px" width="8" height="6.500" viewBox="0 0 8 6.500"><path d="M0 0h8L4 6.500z" fill="#2d384d"/></svg>
<div class="t g" style="left:944.34px;top:398.3px;font-size:12.3px;letter-spacing:0.100px;">Quantity</div>
<div class="t " style="left:944.32px;top:418px;font-size:12.6px;color:#1f2a3f;letter-spacing:-0.393px;">1.00</div>
<div class="a" style="left:945px;top:438px;width:258px;height:0;border-top:1px dashed #8fa1b3"></div>
<div class="a" style="left:1215.5px;top:406px;width:66.5px;height:32.5px;background:#e8ecf2;border-radius:4px"></div>
<svg class="a" style="left:1230px;top:417.500px" width="12" height="12" viewBox="0 0 12 12"><path d="M6 0v12M0 6h12" stroke="#c5cbd4" stroke-width="2.400"/></svg>
<div class="t " style="left:1244.89px;top:413.8px;font-size:13px;color:#c5cbd4;letter-spacing:0.525px;">Add</div>
<div class="inp" style="left:668px;top:451.500px;width:761px;height:25.500px"></div>
<div class="t ph" style="left:675.12px;top:456px;font-size:12.6px;letter-spacing:0.095px;">Enter your search criteria here</div>
<svg class="a" style="left:1438.500px;top:459px" width="13" height="13" viewBox="0 0 14 14" fill="#2d384d"><use href="#filter"/></svg>
<svg class="a" style="left:1463.500px;top:458.300px" width="14" height="14" viewBox="0 0 16 16" fill="#2d384d"><use href="#gear"/></svg>
<div class="t th" style="left:664.39px;top:492px;letter-spacing:0.885px;">Item</div>
<div class="t th" style="left:722.79px;top:492px;letter-spacing:0.364px;">Part</div>
<div class="t th" style="left:933.19px;top:492px;letter-spacing:0.609px;">Qty</div>
<div class="t th" style="left:978.29px;top:492px;letter-spacing:0.230px;">Owner</div>
<div class="t th" style="left:1196.29px;top:492px;letter-spacing:-0.265px;">Assignments</div>
<div class="t th" style="left:1343.19px;top:492px;letter-spacing:-0.113px;">Stock location</div>
<div class="a" style="left:665px;top:513px;width:819px;height:1px;background:#b9c2cf"></div>
<div class="a" style="left:665px;top:561px;width:819px;height:1px;background:#e3e6ee"></div>
<div class="t " style="left:670.5px;top:527.6px;font-size:12.1px;">3</div>
<div class="t b" style="left:723.43px;top:520.2px;font-size:11px;color:#1f2a3f;letter-spacing:0.168px;">233 part helt ny</div>
<svg class="a" style="left:809.5px;top:525.0px" width="10" height="10" viewBox="0 0 10 10"><use href="#lk"/></svg>
<div class="t " style="left:723.32px;top:535.6px;font-size:12.6px;letter-spacing:0.181px;">Tester PDM unitcost</div>
<svg class="a" style="left:892.9px;top:532.1px" width="11.300" height="11.300" viewBox="0 0 16 16" fill="#2d384d"><use href="#gear2"/></svg>
<div class="t " style="left:906.5px;top:527.9px;font-size:10.3px;color:#5d6878;">P</div>
<div class="t " style="right:951.77px;top:527.6px;font-size:12.1px;">2</div>
<div class="t u" style="left:979.15px;top:527.6px;font-size:12.1px;letter-spacing:0.297px;">TEM-NO:SSA/324947-1</div>
<svg class="a" style="left:1260px;top:531px" width="13" height="13" viewBox="0 0 13 13"><use href="#doc"/></svg>
<div class="t " style="left:1354.4px;top:531.0px;font-size:12.8px;color:#1f2a3f;letter-spacing:0.152px;">Unassigned</div>
<div class="a" style="left:1350px;top:550.9px;width:134px;height:0;border-top:1px dashed #8fa1b3"></div>
<svg class="a" style="left:1472.700px;top:536.0px" width="8.500" height="6.800" viewBox="0 0 8.500 7"><path d="M0 0h8.500L4.250 7z" fill="#f57c00"/></svg>
<div class="a" style="left:665px;top:609px;width:819px;height:1px;background:#e3e6ee"></div>
<div class="t " style="left:670.5px;top:575.6px;font-size:12.1px;">4</div>
<div class="t b" style="left:723.43px;top:568.2px;font-size:11px;color:#1f2a3f;letter-spacing:0.214px;">233 PDM mat 1</div>
<svg class="a" style="left:806.5px;top:573.0px" width="10" height="10" viewBox="0 0 10 10"><use href="#lk"/></svg>
<div class="t " style="left:723.32px;top:583.6px;font-size:12.6px;letter-spacing:0.289px;">Materiale 1 for PDM-test</div>
<svg class="a" style="left:893.300px;top:580.7px" width="11.500" height="10.500" viewBox="0 0 11.500 10.500"><path d="M0 3.100L11 0 8.400 4.300 5.200 3.900z" fill="#2d384d"/><path d="M.8 7.600L6.600 4.900 5.200 7.700z" fill="#2d384d"/><path d="M10.600 1.500L7.200 10.200" stroke="#2d384d" stroke-width=".8"/><path d="M8 5L6.300 8.700" stroke="#2d384d" stroke-width=".6"/></svg>
<div class="t " style="left:906.9px;top:575.9px;font-size:10.3px;color:#5d6878;">M</div>
<div class="t " style="right:952.01px;top:575.6px;font-size:12.1px;letter-spacing:-0.235px;">19</div>
<div class="t u" style="left:979.15px;top:575.6px;font-size:12.1px;letter-spacing:0.297px;">TEM-NO:SSA/322286-1</div>
<svg class="a" style="left:1260px;top:579px" width="13" height="13" viewBox="0 0 13 13"><use href="#doc"/></svg>
<div class="t " style="left:1354.4px;top:579.0px;font-size:12.8px;color:#1f2a3f;letter-spacing:0.152px;">Unassigned</div>
<div class="a" style="left:1350px;top:598.9px;width:134px;height:0;border-top:1px dashed #8fa1b3"></div>
<svg class="a" style="left:1472.700px;top:584.0px" width="8.500" height="6.800" viewBox="0 0 8.500 7"><path d="M0 0h8.500L4.250 7z" fill="#f57c00"/></svg>
<div class="a" style="left:665px;top:657px;width:819px;height:1px;background:#e3e6ee"></div>
<div class="t " style="left:670.5px;top:623.6px;font-size:12.1px;">4</div>
<div class="t b" style="left:723.43px;top:616.2px;font-size:11px;color:#1f2a3f;letter-spacing:0.214px;">233 PDM mat 1</div>
<svg class="a" style="left:806.5px;top:621.0px" width="10" height="10" viewBox="0 0 10 10"><use href="#lk"/></svg>
<div class="t " style="left:723.32px;top:631.6px;font-size:12.6px;letter-spacing:0.289px;">Materiale 1 for PDM-test</div>
<svg class="a" style="left:893.300px;top:628.7px" width="11.500" height="10.500" viewBox="0 0 11.500 10.500"><path d="M0 3.100L11 0 8.400 4.300 5.200 3.900z" fill="#2d384d"/><path d="M.8 7.600L6.600 4.900 5.200 7.700z" fill="#2d384d"/><path d="M10.600 1.500L7.200 10.200" stroke="#2d384d" stroke-width=".8"/><path d="M8 5L6.300 8.700" stroke="#2d384d" stroke-width=".6"/></svg>
<div class="t " style="left:906.9px;top:623.9px;font-size:10.3px;color:#5d6878;">M</div>
<div class="t " style="right:951.77px;top:623.6px;font-size:12.1px;">1</div>
<div class="t u" style="left:979.15px;top:623.6px;font-size:12.1px;letter-spacing:0.297px;">TEM-NO:SSA/327912-1</div>
<svg class="a" style="left:1260px;top:627px" width="13" height="13" viewBox="0 0 13 13"><use href="#doc"/></svg>
<div class="t " style="left:1354.4px;top:627.0px;font-size:12.8px;color:#1f2a3f;letter-spacing:0.152px;">Unassigned</div>
<div class="a" style="left:1350px;top:646.9px;width:134px;height:0;border-top:1px dashed #8fa1b3"></div>
<svg class="a" style="left:1472.700px;top:632.0px" width="8.500" height="6.800" viewBox="0 0 8.500 7"><path d="M0 0h8.500L4.250 7z" fill="#f57c00"/></svg>
<div class="a" style="left:665px;top:705px;width:819px;height:1px;background:#e3e6ee"></div>
<div class="t " style="left:670.5px;top:671.6px;font-size:12.1px;">5</div>
<div class="t b" style="left:723.43px;top:671.1px;font-size:11px;color:#1f2a3f;letter-spacing:-0.111px;">Joystick Development Board</div>
<svg class="a" style="left:874.8px;top:676.2px" width="9.8" height="9.8" viewBox="0 0 10 10"><use href="#lk"/></svg>
<svg class="a" style="left:892.700px;top:675.9px" width="12.300" height="11" viewBox="0 0 12.300 11"><path d="M2.900 3.200V.600H9.400V3.200" fill="none" stroke="#2d384d" stroke-width="1.100"/><rect x="0" y="3" width="12.300" height="8" rx=".9" fill="#2d384d"/><path d="M2.300 5.200L4.500 6.800 8.300 11M9.800 5.200L7.600 6.800 4 11" stroke="#fff" stroke-width="1.250" fill="none"/><path d="M1.800 6.300l2.300-1.800" stroke="#fff" stroke-width="1.600"/><path d="M10.300 6.300L8 4.500" stroke="#fff" stroke-width="1.600"/></svg>
<div class="t " style="left:906.8px;top:671.9px;font-size:10px;color:#717b8a;">K</div>
<div class="t " style="right:951.77px;top:671.6px;font-size:12.1px;">1</div>
<div class="t u" style="left:979.15px;top:671.6px;font-size:12.1px;letter-spacing:0.297px;">TEM-NO:SSA/330864-1</div>
<svg class="a" style="left:1260px;top:675px" width="13" height="13" viewBox="0 0 13 13"><use href="#doc"/></svg>
<div class="t " style="left:1354.4px;top:675.0px;font-size:12.8px;color:#1f2a3f;letter-spacing:0.152px;">Unassigned</div>
<div class="a" style="left:1350px;top:694.9px;width:134px;height:0;border-top:1px dashed #8fa1b3"></div>
<svg class="a" style="left:1472.700px;top:680.0px" width="8.500" height="6.800" viewBox="0 0 8.500 7"><path d="M0 0h8.500L4.250 7z" fill="#f57c00"/></svg>
<div class="a" style="left:665px;top:753px;width:819px;height:1px;background:#e3e6ee"></div>
<div class="t " style="left:670.5px;top:719.6px;font-size:12.1px;">6</div>
<div class="t b" style="left:723.43px;top:719.1px;font-size:11px;color:#1f2a3f;letter-spacing:-0.111px;">Joystick Development Board</div>
<svg class="a" style="left:874.8px;top:724.2px" width="9.8" height="9.8" viewBox="0 0 10 10"><use href="#lk"/></svg>
<svg class="a" style="left:892.700px;top:723.9px" width="12.300" height="11" viewBox="0 0 12.300 11"><path d="M2.900 3.200V.600H9.400V3.200" fill="none" stroke="#2d384d" stroke-width="1.100"/><rect x="0" y="3" width="12.300" height="8" rx=".9" fill="#2d384d"/><path d="M2.300 5.200L4.500 6.800 8.300 11M9.800 5.200L7.600 6.800 4 11" stroke="#fff" stroke-width="1.250" fill="none"/><path d="M1.800 6.300l2.300-1.800" stroke="#fff" stroke-width="1.600"/><path d="M10.300 6.300L8 4.500" stroke="#fff" stroke-width="1.600"/></svg>
<div class="t " style="left:906.8px;top:719.9px;font-size:10px;color:#717b8a;">K</div>
<div class="t " style="right:951.77px;top:719.6px;font-size:12.1px;">1</div>
<div class="t u" style="left:979.15px;top:719.6px;font-size:12.1px;letter-spacing:0.425px;">TEM-NO:PWO/130869-1</div>
<svg class="a" style="left:1260px;top:723px" width="13" height="13" viewBox="0 0 13 13"><use href="#doc"/></svg>
<div class="a" style="left:665px;top:886px;width:819px;height:17px;background:#e6e7eb"></div>
<div class="a" style="left:665px;top:886px;width:586px;height:17px;background:#adb4be"></div>
<svg class="a" style="left:681px;top:916px" width="12" height="12" viewBox="0 0 12 12"><path d="M6 0v12M0 6h12" stroke="#1f2a3f" stroke-width="2.400"/></svg>
<div class="t " style="left:698.12px;top:912px;font-size:12.6px;letter-spacing:0.267px;">Add/remove extra cost</div>
<div class="t " style="left:1302.44px;top:912px;font-size:10.8px;letter-spacing:0.119px;">Record 1 - 5 / 5</div>
<svg class="a" style="left:1395px;top:918px" width="10" height="8" viewBox="0 0 10 8" fill="#d5d9df"><path d="M1 0h1.600v8H1zM8 0v8L2.600 4z"/></svg>
<svg class="a" style="left:1420px;top:918px" width="10" height="8" viewBox="0 0 10 8" fill="#d5d9df"><path d="M7 0v8L1.500 4z"/></svg>
<svg class="a" style="left:1442.5px;top:918px" width="10" height="8" viewBox="0 0 10 8" fill="#d5d9df"><path d="M2 0v8l5.500-4z"/></svg>
<svg class="a" style="left:1466.5px;top:918px" width="10" height="8" viewBox="0 0 10 8" fill="#d5d9df"><path d="M7.400 0H9v8H7.400zM1 0v8l6.400-4z"/></svg>
<div class="a" style="left:653px;top:944.5px;width:842px;height:6.5px;background:#fefefe"></div>
<div class="a" style="left:650px;top:345px;width:848px;height:609px;border:3px solid #ff0000"></div>
<div class="t g" style="left:1507.84px;top:106.8px;font-size:12.3px;letter-spacing:0.011px;">Work order operation</div>
<svg class="a" style="left:1626.4px;top:111.6px" width="10.5" height="10.5" viewBox="0 0 10 10"><use href="#lk"/></svg>
<div class="t " style="left:1507.82px;top:126.6px;font-size:12.6px;color:#1f2a3f;letter-spacing:-0.167px;">124089 - SERVICE - Ready</div>
<div class="a" style="left:1508px;top:147px;width:367px;height:1px;background:#8fa1b3"></div>
<div class="a c" style="left:1875.0px;top:127.5px;width:19px;height:19px;line-height:19px;background:#2089f0;color:#fff;font-size:11.5px">3</div>
<div class="t " style="left:1507.83px;top:155.5px;font-size:12.4px;color:#1f2a3f;letter-spacing:0.224px;">00:00</div>
<div class="t " style="left:1867.63px;top:155.5px;font-size:12.4px;color:#1f2a3f;letter-spacing:0.224px;">01:00</div>
<div class="a" style="left:1508px;top:177px;width:393px;height:13.5px;border:1px solid #e2e5e9;border-radius:6px;background:#f1f2f4"></div>
<div class="btn" style="left:1706.500px;top:199px;width:186px;height:33px"></div>
<div class="btn" style="left:1706.500px;top:277px;width:186px;height:33px"></div>
<svg class="a" style="left:1783px;top:210.500px" width="9.500" height="11" viewBox="0 0 9.500 11"><path d="M0 0l9.500 5.500L0 11z" fill="#1f2a3f"/></svg>
<div class="t " style="left:1796.02px;top:206px;font-size:11.2px;color:#1f2a3f;letter-spacing:-0.996px;">START</div>
<svg class="a" style="left:1774px;top:288px" width="9.500" height="11.500" viewBox="0 0 10 12"><path d="M2 1.500a.8.800 0 0 1 1.600 0V5h.3V.9a.8.800 0 0 1 1.600 0V5h.3V1.400a.8.800 0 0 1 1.600 0V5.500h.3V3a.8.800 0 0 1 1.600 0v5c0 2.500-1.500 4-4 4-2 0-3-1-3.800-2.500L.2 7.200c-.4-.8.600-1.400 1.100-.7L2 7.500z" fill="#1f2a3f"/></svg>
<div class="t " style="left:1786.92px;top:284px;font-size:11.2px;color:#1f2a3f;letter-spacing:-0.121px;">ON HOLD</div>
<svg class="a" style="left:1574.500px;top:210px" width="12" height="12" viewBox="0 0 12 12"><circle cx="6" cy="6" r="6" fill="#c5cad3"/><path d="M3 6.200l2.200 2.200 3.800-4" stroke="#f3f4f6" stroke-width="1.700" fill="none"/></svg>
<div class="t dis" style="left:1589.06px;top:206px;font-size:10.6px;color:#c5cad3;letter-spacing:-0.645px;">SET READY</div>
<svg class="a" style="left:1587px;top:249.500px" width="10" height="11" viewBox="0 0 10 11"><path d="M0 0h4v11H0zM6 0h4v11H6z" fill="#c5cad3"/></svg>
<div class="t dis" style="left:1599.76px;top:245px;font-size:10.6px;color:#c5cad3;letter-spacing:-0.710px;">PAUSE</div>
<svg class="a" style="left:1771px;top:250px" width="10.500" height="10" viewBox="0 0 10.500 10"><path d="M0 5h7M4.500 2l3 3-3 3M9.800 1v8" stroke="#c5cad3" stroke-width="1.300" fill="none"/></svg>
<div class="t dis" style="left:1784.06px;top:245px;font-size:10.6px;color:#c5cad3;letter-spacing:0.079px;">CONTINUE</div>
<svg class="a" style="left:1576px;top:289px" width="10" height="9" viewBox="0 0 10 9"><path d="M.8 4.800l3 3L9.300 1" stroke="#c5cad3" stroke-width="2.200" fill="none"/></svg>
<div class="t dis" style="left:1588.66px;top:284px;font-size:10.6px;color:#c5cad3;letter-spacing:-0.454px;">COMPLETE</div>
<div class="t g" style="left:1512.44px;top:317px;font-size:12.3px;letter-spacing:-0.019px;">Operator</div>
<div class="a" style="left:1508px;top:336px;width:200px;height:11px;overflow:hidden"><div class="t ph" style="left:4.800px;top:1.200px;font-size:12.600px;letter-spacing:0.1px">Select operator</div><svg class="a" style="left:171px;top:6.500px" width="8" height="6" viewBox="0 0 8 6"><path d="M0 0h8L4 6z" fill="#2d384d"/></svg></div>
<svg class="a" style="left:1901.500px;top:335px" width="8" height="8" viewBox="0 0 8 8"><path d="M.6 .8l3.400 3L7.400 .8M.6 4l3.400 3 3.400-3" stroke="#4d586a" stroke-width="1.050" fill="none"/></svg>
<div class="t h" style="left:1503.25px;top:356.6px;letter-spacing:-0.035px;">Previous service parts</div>
<div class="card" style="left:1503px;top:377px;width:408px;height:430px;border-radius:0 0 4px 4px"></div>
<div class="a" style="left:1503px;top:376.5px;width:408px;height:2.0px;background:#f57c00"></div>
<div class="inp" style="left:1511px;top:386px;width:340px;height:26px"></div>
<div class="t ph" style="left:1518.42px;top:390.9px;font-size:12.6px;letter-spacing:0.095px;">Enter your search criteria here</div>
<svg class="a" style="left:1860.200px;top:394px" width="13" height="13" viewBox="0 0 14 14" fill="#2d384d"><use href="#filter"/></svg>
<svg class="a" style="left:1885.200px;top:393.200px" width="14" height="14" viewBox="0 0 16 16" fill="#2d384d"><use href="#gear"/></svg>
<div class="t th" style="left:1512.09px;top:427.8px;letter-spacing:0.364px;">Part</div>
<div class="t th" style="left:1819.09px;top:426.5px;letter-spacing:-0.207px;">Qua...</div>
<div class="a" style="left:1508px;top:449px;width:397.5px;height:1px;background:#b9c2cf"></div>
<div class="t h" style="left:1503.45px;top:819.5px;letter-spacing:0.126px;">Price</div>
<div class="a" style="left:1503px;top:839.7px;width:408px;height:2.0px;background:#f57c00"></div>
<div class="t g" style="left:1502.54px;top:851.2px;font-size:12.3px;letter-spacing:-0.214px;">Service job</div>
<div class="t " style="right:226.73px;top:851.2px;font-size:12.6px;color:#1f2a3f;letter-spacing:0.315px;">4,286.97</div>
<div class="a" style="left:1503px;top:870.5px;width:192px;height:1px;background:#b9c2cf"></div>
<div class="t g" style="left:1502.54px;top:873.5px;font-size:12.3px;letter-spacing:-0.447px;">VAT</div>
<div class="t " style="right:226.44px;top:873.5px;font-size:12.6px;color:#1f2a3f;letter-spacing:0.607px;">0.00</div>
<div class="a" style="left:1503px;top:893.8px;width:192px;height:1px;background:#b9c2cf"></div>
<div class="t g" style="left:1706.54px;top:851.2px;font-size:12.3px;letter-spacing:0.053px;">Subtotal</div>
<div class="t " style="right:23.42px;top:851.2px;font-size:12.6px;color:#1f2a3f;letter-spacing:0.021px;">841.99</div>
<div class="a" style="left:1707px;top:870.5px;width:192px;height:1px;background:#b9c2cf"></div>
<div class="t b" style="left:1706.49px;top:873.5px;font-size:13px;color:#1f2a3f;letter-spacing:-0.276px;">Total</div>
<div class="t b" style="right:23.25px;top:873.5px;font-size:13.4px;color:#1f2a3f;letter-spacing:0.145px;">5,128.96</div>
<div class="a" style="left:1707px;top:893.8px;width:192px;height:1px;background:#b9c2cf"></div>
</body></html>
